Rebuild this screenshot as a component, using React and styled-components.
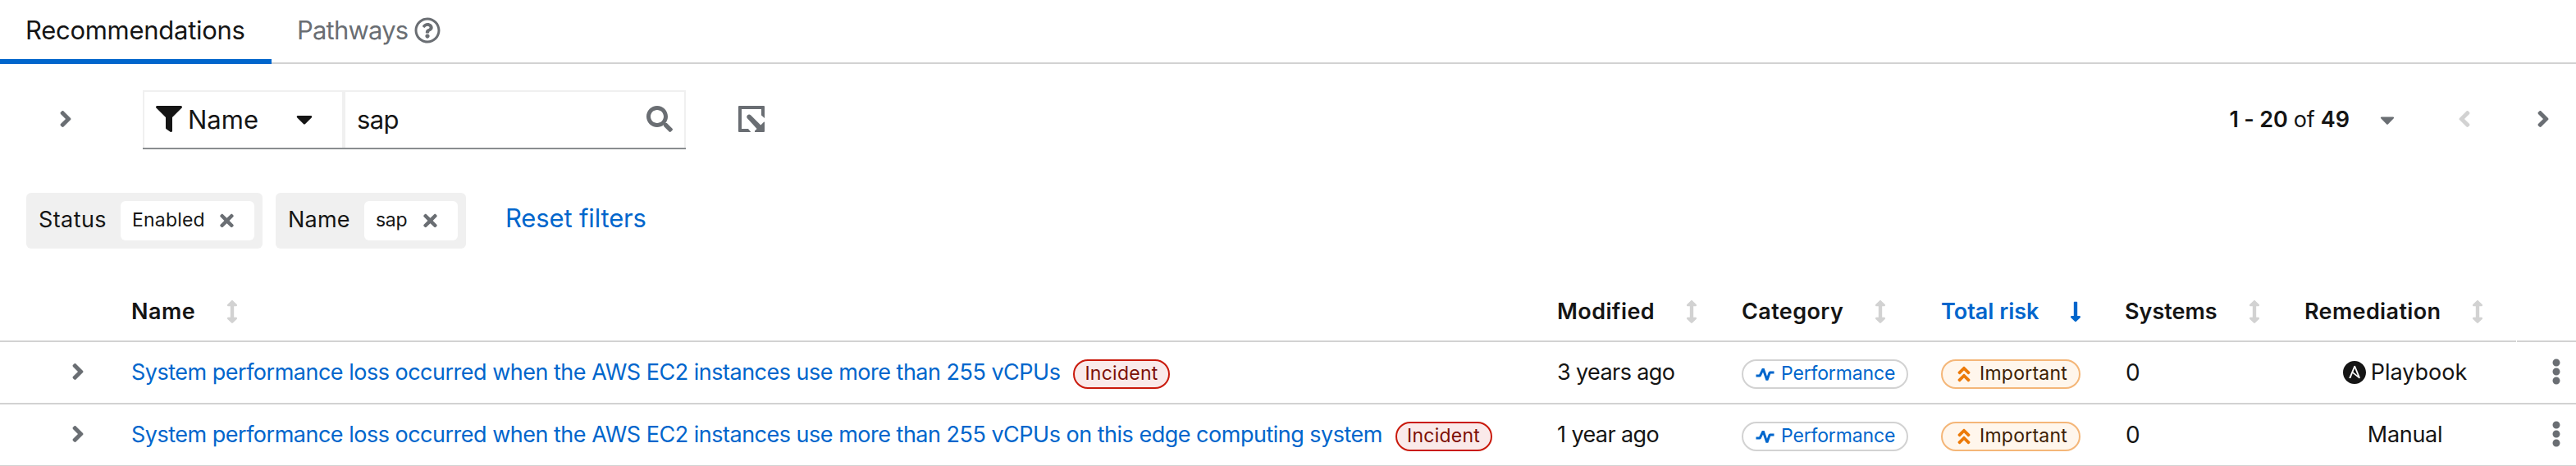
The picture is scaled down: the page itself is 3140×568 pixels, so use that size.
import React from "react";
import styled, { createGlobalStyle } from "styled-components";
import {
  FaAngleDoubleUp,
  FaAngleLeft,
  FaAngleRight,
  FaArrowsAltV,
  FaCaretDown,
  FaEllipsisV,
  FaFilter,
  FaLongArrowAltDown,
  FaRegQuestionCircle,
  FaSearch,
  FaTimes,
} from "react-icons/fa";

const color = {
  text: "#151515",
  muted: "#6a6e73",
  link: "#0066cc",
  line: "#d2d2d2",
  soft: "#f0f0f0",
};

const GlobalStyle = createGlobalStyle`
  *, *::before, *::after { box-sizing: border-box; }
  body {
    margin: 0;
    background: #fff;
    color: ${color.text};
    font-family: Inter, "Liberation Sans", sans-serif;
    overflow: hidden;
  }
  svg { display: block; flex: none; }
`;

const Page = styled.main`
  width: 3140px;
  height: 568px;
  overflow: hidden;
`;

const Text = styled.span`
  white-space: pre;
  line-height: 1.3;
  font-size: ${(p) => p.$size || 27}px;
  font-weight: ${(p) => (p.$bold ? 600 : 400)};
  letter-spacing: ${(p) => p.$track || 0}px;
`;

/* Tabs */
const Tabs = styled.nav`
  display: flex;
  height: 78px;
  box-shadow: inset 0 -2px 0 ${color.line};
`;

const Tab = styled.div`
  display: flex;
  align-items: center;
  gap: 8px;
  width: ${(p) => p.$width}px;
  padding: 0 0 3px 31px;
  color: ${(p) => (p.$active ? color.text : color.muted)};
  box-shadow: ${(p) => (p.$active ? `inset 0 -6px 0 ${color.link}` : "none")};

  svg { margin-bottom: 2px; }
`;

/* Toolbar */
const Toolbar = styled.div`
  display: flex;
  align-items: flex-start;
  height: 157px;
  padding-top: 32px;
`;

const IconButton = styled.span`
  display: flex;
  align-items: center;
  justify-content: center;
  width: ${(p) => p.$width}px;
  height: 70px;
  color: ${(p) => (p.$disabled ? color.line : color.muted)};
  font-size: 32px;
`;

const FilterGroup = styled.div`
  display: flex;
  width: 662px;
  height: 72px;
  margin-left: 15px;
  border-bottom: 2px solid #8a8d90;
`;

const FilterSelect = styled.div`
  display: flex;
  align-items: center;
  width: 245px;
  padding: 0 30px 2px 14px;
  border: 2px solid ${color.soft};
  border-bottom: 0;
  font-size: 32px;

  ${Text} { flex: 1; margin: 2px 0 0 7px; }
`;

const SearchField = styled.div`
  display: flex;
  align-items: center;
  justify-content: space-between;
  flex: 1;
  padding: 0 14px 2px;
  border: 2px solid ${color.soft};
  border-bottom: 0;
  color: ${color.text};

  svg { color: ${color.muted}; font-size: 32px; }
  ${Text} { margin-top: 2px; }
`;

const Pagination = styled.div`
  display: flex;
  align-items: center;
  height: 72px;
  margin-left: auto;
`;

const PageCaret = styled.span`
  display: flex;
  margin: 0 24px 0 32px;
  color: ${color.muted};
  font-size: 28px;
`;

/* Filter chips */
const ChipBar = styled.div`
  display: flex;
  gap: 16px;
  height: 108px;
  padding-left: 32px;
`;

const ChipGroup = styled.div`
  display: flex;
  align-items: center;
  justify-content: space-between;
  width: ${(p) => p.$width}px;
  height: 68px;
  padding: 0 10px 0 15px;
  border-radius: 6px;
  background: ${color.soft};

  & > ${Text} { margin-bottom: 3px; }
`;

const Chip = styled.div`
  display: flex;
  align-items: center;
  justify-content: space-between;
  width: ${(p) => p.$width}px;
  height: 48px;
  padding: 0 25px 1px 14px;
  border-radius: 6px;
  background: #fff;

  svg { color: ${color.muted}; width: 17px; height: 24px; }
`;

const ResetLink = styled.a`
  margin: 11px 0 0 32px;
  color: ${color.link};
`;

/* Table */
const Row = styled.div`
  display: grid;
  grid-template-columns: 160px 1738px 225px 243px 224px 219px 258px 73px;
  height: 76px;
  border-bottom: 2px solid ${color.line};
`;

const HeadRow = styled(Row)`
  height: 74px;
  border-bottom: 0;
`;

const HeadCell = styled.div`
  display: flex;
  align-items: center;
  gap: 38px;
  margin-left: ${(p) => (p.$last ? 1 : 0)}px;
  padding-top: 2px;
  border-bottom: 2px solid ${color.line};
  color: ${(p) => (p.$active ? color.link : color.text)};

  svg {
    color: ${(p) => (p.$active ? color.link : color.line)};
    width: 14px;
    height: 28px;
  }
`;

const Cell = styled.div`
  display: flex;
  align-items: center;
`;

const ToggleCell = styled(Cell)`
  padding: 0 0 2px 79px;
  color: ${color.muted};
  font-size: 32px;
`;

const NameCell = styled(Cell)`
  gap: 16px;
  color: ${color.link};
`;

const CountCell = styled(Cell)`
  padding-left: 1px;
`;

const RemediationCell = styled(Cell)`
  justify-content: center;
  gap: 6px;
  padding-right: 13px;
`;

const KebabCell = styled(Cell)`
  padding: 0 0 3px 33px;
  color: ${color.muted};
  font-size: 32px;
`;

const badgeTone = {
  incident: { border: "#c9190b", fill: "#faeaea", ink: "#7d1007", icon: "#c9190b" },
  category: { border: "#d2d2d2", fill: "#ffffff", ink: "#0066cc", icon: "#0066cc" },
  risk: { border: "#f4b678", fill: "#fff6ec", ink: "#3d2005", icon: "#ec7a08" },
};

const Badge = styled.span`
  display: flex;
  align-items: center;
  gap: ${(p) => p.$gap || 0}px;
  width: ${(p) => p.$width}px;
  height: 36px;
  margin-top: 4px;
  padding-left: ${(p) => p.$inset}px;
  border: 2px solid ${(p) => badgeTone[p.$tone].border};
  border-radius: 18px;
  background: ${(p) => badgeTone[p.$tone].fill};
  color: ${(p) => badgeTone[p.$tone].ink};

  svg {
    margin-bottom: 1px;
    color: ${(p) => badgeTone[p.$tone].icon};
    font-size: 24px;
  }
`;

const ExportIcon = () => (
  <svg width="32" height="32" viewBox="0 0 32 32" fill="currentColor">
    <path d="M1 0H31Q32 0 32 1V15L28 11.5V4H4V28H12L15.3 32H1Q0 32 0 31V1Q0 0 1 0Z" />
    <path d="M32 19.5V31Q32 32 31 32H20V30.5L22.6 28L10.7 15Q9.4 13.3 11 11.6Q13 9.5 15 11.2L27.3 23.4L31 19.7Z" />
  </svg>
);

const PulseIcon = () => (
  <svg width="23" height="20" viewBox="0 0 23 20" fill="none" stroke="currentColor">
    <path
      d="M0.5 12H5.2L9.2 3.6L13.9 17.2L17.2 8H22.5"
      strokeWidth="3"
      strokeLinejoin="bevel"
    />
  </svg>
);

const AnsibleIcon = () => (
  <svg width="28" height="28" viewBox="0 0 24 24" fill="currentColor">
    <path d="M10.617 11.473l4.686 3.695-3.102-7.662zM12 0C5.371 0 0 5.371 0 12s5.371 12 12 12 12-5.371 12-12S18.629 0 12 0zm5.797 17.305c-.011.471-.403.842-.875.83-.236 0-.416-.09-.664-.293l-6.19-5-2.079 5.203H6.191L11.438 5.44c.124-.314.427-.52.764-.506.326-.014.63.189.742.506l4.774 11.494c.045.111.08.234.08.348-.001.009-.001.009-.001.023z" />
  </svg>
);

const columns = [
  { label: "Name", track: 0.5 },
  { label: "Modified", track: 0.4 },
  { label: "Category", track: 0.4 },
  { label: "Total risk", track: 0, active: true },
  { label: "Systems", track: 0 },
  { label: "Remediation", track: 0.35 },
];

const rows = [
  {
    name: "System performance loss occurred when the AWS EC2 instances use more than 255 vCPUs",
    modified: "3 years ago",
    systems: 0,
    playbook: true,
  },
  {
    name: "System performance loss occurred when the AWS EC2 instances use more than 255 vCPUs on this edge computing system",
    modified: "1 year ago",
    systems: 0,
    playbook: false,
  },
];

const RuleRow = ({ rule }) => (
  <Row>
    <ToggleCell>
      <FaAngleRight />
    </ToggleCell>
    <NameCell>
      <Text $track={-0.5}>{rule.name}</Text>
      <Badge $tone="incident" $width={118} $inset={12}>
        <Text $size={23} $track={0.25}>Incident</Text>
      </Badge>
    </NameCell>
    <Cell>
      <Text $track={-0.6}>{rule.modified}</Text>
    </Cell>
    <Cell>
      <Badge $tone="category" $width={203} $inset={15} $gap={8}>
        <PulseIcon />
        <Text $size={23} $track={-0.15}>Performance</Text>
      </Badge>
    </Cell>
    <Cell>
      <Badge $tone="risk" $width={170} $inset={14} $gap={7}>
        <FaAngleDoubleUp />
        <Text $size={23} $track={0.25}>Important</Text>
      </Badge>
    </Cell>
    <CountCell>
      <Text $size={28}>{rule.systems}</Text>
    </CountCell>
    <RemediationCell>
      {rule.playbook && <AnsibleIcon />}
      <Text $track={rule.playbook ? 0 : -0.3}>{rule.playbook ? "Playbook" : "Manual"}</Text>
    </RemediationCell>
    <KebabCell>
      <FaEllipsisV />
    </KebabCell>
  </Row>
);

export default function App() {
  return (
    <Page>
      <GlobalStyle />
      <Tabs>
        <Tab $active $width={331}>
          <Text $size={31} $track={-0.28}>Recommendations</Text>
        </Tab>
        <Tab $width={240}>
          <Text $size={31} $track={-0.8}>Pathways</Text>
          <FaRegQuestionCircle size={32} />
        </Tab>
      </Tabs>

      <Toolbar>
        <IconButton $width={159}>
          <FaAngleRight />
        </IconButton>
        <FilterGroup>
          <FilterSelect>
            <FaFilter />
            <Text $size={31}>Name</Text>
            <FaCaretDown />
          </FilterSelect>
          <SearchField>
            <Text $size={31} $track={-0.6}>sap</Text>
            <FaSearch />
          </SearchField>
        </FilterGroup>
        <IconButton $width={160}>
          <ExportIcon />
        </IconButton>
        <Pagination>
          <Text $bold $track={-0.2}>1 - 20</Text>
          <Text $track={-0.3}> of </Text>
          <Text $bold>49</Text>
          <PageCaret>
            <FaCaretDown />
          </PageCaret>
        </Pagination>
        <IconButton $width={112} $disabled>
          <FaAngleLeft />
        </IconButton>
        <IconButton $width={80}>
          <FaAngleRight />
        </IconButton>
      </Toolbar>

      <ChipBar>
        <ChipGroup $width={288}>
          <Text $track={0.4}>Status</Text>
          <Chip $width={163}>
            <Text $size={23} $track={0.2}>Enabled</Text>
            <FaTimes />
          </Chip>
        </ChipGroup>
        <ChipGroup $width={232}>
          <Text $track={0.2}>Name</Text>
          <Chip $width={114}>
            <Text $size={23} $track={-0.3}>sap</Text>
            <FaTimes />
          </Chip>
        </ChipGroup>
        <ResetLink>
          <Text $size={31} $track={-0.15}>Reset filters</Text>
        </ResetLink>
      </ChipBar>

      <HeadRow>
        <HeadCell />
        {columns.map((c) => (
          <HeadCell key={c.label} $active={c.active}>
            <Text $bold $track={c.track}>{c.label}</Text>
            {c.active ? <FaLongArrowAltDown /> : <FaArrowsAltV />}
          </HeadCell>
        ))}
        <HeadCell $last />
      </HeadRow>
      {rows.map((r) => (
        <RuleRow key={r.name} rule={r} />
      ))}
    </Page>
  );
}
